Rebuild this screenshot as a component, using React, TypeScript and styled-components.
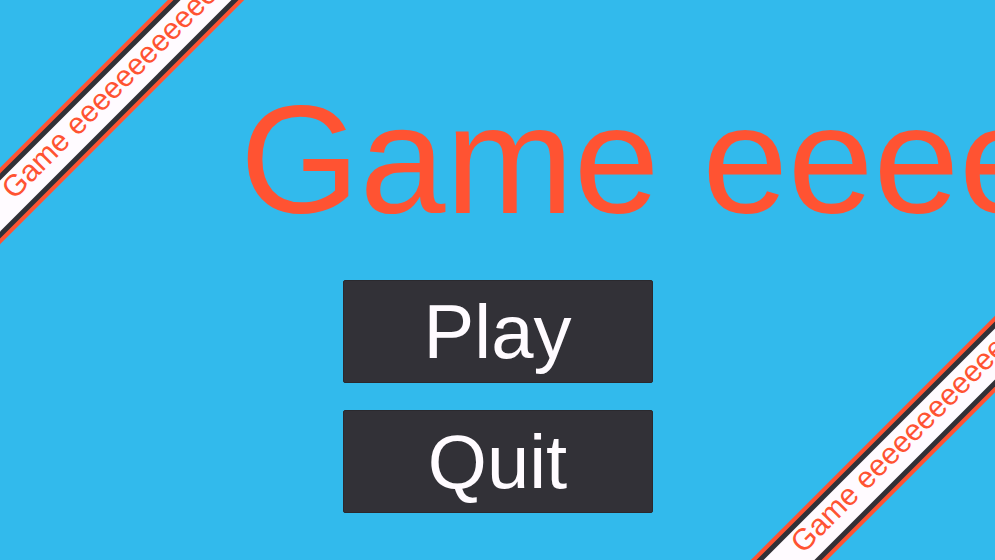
import React from 'react';
import styled, { createGlobalStyle } from 'styled-components';

const GlobalStyle = createGlobalStyle`
  html, body {
    margin: 0;
    padding: 0;
    background: #32baec;
    font-family: "Liberation Sans", Arial, sans-serif;
  }
`;

const Screen = styled.div`
  position: relative;
  width: 100vw;
  height: 100vh;
  overflow: hidden;
  background: #32baec;
  display: flex;
  flex-direction: column;
  padding-top: 83px;
  box-sizing: border-box;
`;

const Title = styled.h1`
  margin: 0 0 0 240px;
  height: 154px;
  font-size: 154px;
  line-height: 154px;
  font-weight: 400;
  color: #ff5332;
  white-space: nowrap;
`;

const Menu = styled.div`
  margin-top: 43px;
  display: flex;
  flex-direction: column;
  align-items: center;
  gap: 27px;
`;

const MenuButton = styled.button`
  width: 310px;
  height: 103px;
  margin: 0;
  padding: 0;
  display: flex;
  align-items: center;
  justify-content: center;
  background: #323137;
  border: 1px solid #2a292e;
  border-radius: 2px;
  color: #fffbff;
  font-family: "Liberation Sans", Arial, sans-serif;
  font-size: 76px;
  line-height: 1;
  cursor: pointer;
`;

const Ribbon = styled.div<{ $cx: number; $cy: number }>`
  position: absolute;
  left: ${p => p.$cx - 350}px;
  top: ${p => p.$cy - 27}px;
  width: 700px;
  padding: 4px 0;
  background: #ff5332;
  transform: rotate(-45deg);
  pointer-events: none;
`;

const RibbonTrack = styled.div`
  padding: 5px 0;
  background: #323137;
`;

const RibbonLabel = styled.div`
  height: 36px;
  padding-left: 218px;
  padding-top: 1px;
  box-sizing: border-box;
  background: #fffbff;
  color: #ff5332;
  font-size: 30px;
  line-height: 26px;
  white-space: nowrap;
  overflow: hidden;
`;

const ribbonText = 'Game ' + 'e'.repeat(30);

function CornerRibbon({ cx, cy }: { cx: number; cy: number }) {
  return (
    <Ribbon $cx={cx} $cy={cy}>
      <RibbonTrack>
        <RibbonLabel>{ribbonText}</RibbonLabel>
      </RibbonTrack>
    </Ribbon>
  );
}

export default function App() {
  return (
    <>
      <GlobalStyle />
      <Screen>
        <Title>Game eeeeeeeeee</Title>
        <Menu>
          <MenuButton>Play</MenuButton>
          <MenuButton>Quit</MenuButton>
        </Menu>
        <CornerRibbon cx={103} cy={103} />
        <CornerRibbon cx={892} cy={457} />
      </Screen>
    </>
  );
}
